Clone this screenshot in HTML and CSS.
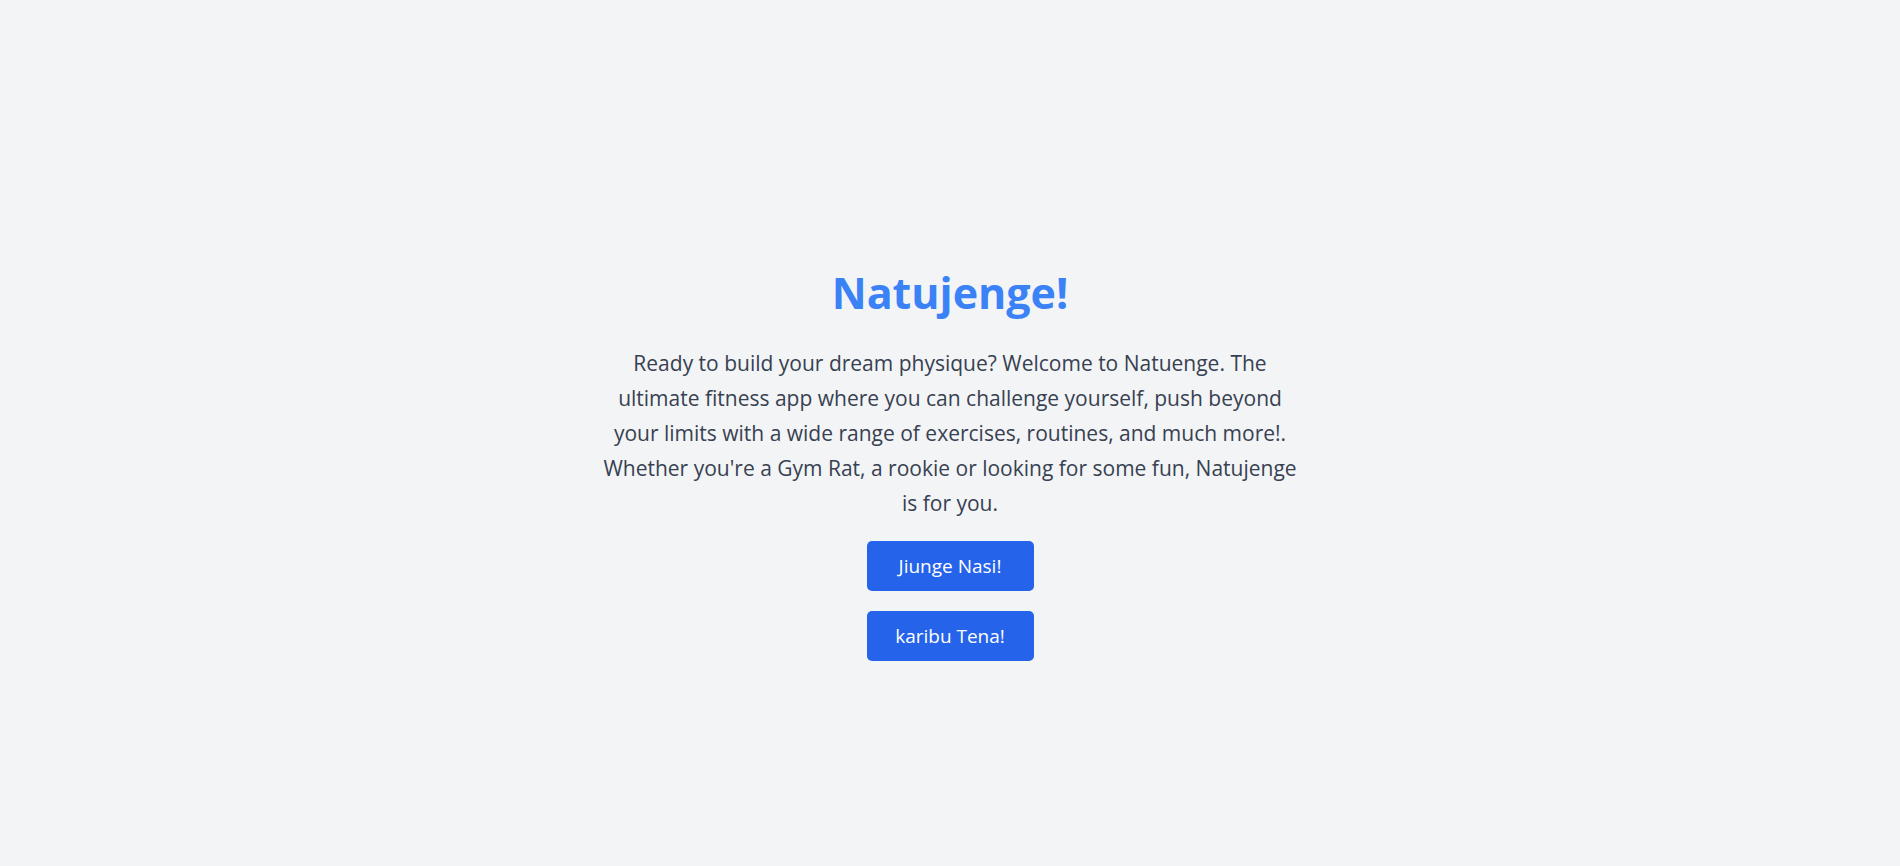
FILE: index.html
```html
<!DOCTYPE html>
<html lang="en">
<head>
<meta charset="utf-8">
<title>Natujenge!</title>
<link rel="stylesheet" href="styles.css">
</head>
<body>
<main class="hero">
  <h1 class="title">Natujenge!</h1>
  <p class="lead">Ready to build your dream physique? Welcome to Natuenge. The ultimate fitness app where you can challenge yourself, push beyond your limits with a wide range of exercises, routines, and much more!. Whether you're a Gym Rat, a rookie or looking for some fun, Natujenge is for you.</p>
  <div class="actions">
    <button class="btn">Jiunge Nasi!</button>
    <button class="btn">karibu Tena!</button>
  </div>
</main>
</body>
</html>
```

FILE: styles.css
```css
html, body {
  margin: 0;
  padding: 0;
  background: #f3f4f6;
}
body {
  font-family: "Open Sans", "Noto Sans", sans-serif;
  min-height: 866px;
}
.hero {
  display: flex;
  flex-direction: column;
  align-items: center;
  padding-top: 268px;
}
.title {
  margin: 0 0 28px;
  font-size: 43px;
  line-height: 50px;
  font-weight: 700;
  color: #3b82f6;
}
.lead {
  margin: 0 0 20px;
  max-width: 706px;
  text-align: center;
  font-size: 21px;
  line-height: 35px;
  color: #374151;
}
.actions {
  display: flex;
  flex-direction: column;
  align-items: stretch;
  gap: 20px;
  width: 167px;
}
.btn {
  font-family: inherit;
  font-size: 19px;
  line-height: 30px;
  padding: 10px 0;
  border: 0;
  border-radius: 5px;
  background: #2563eb;
  color: #fff;
}
```
